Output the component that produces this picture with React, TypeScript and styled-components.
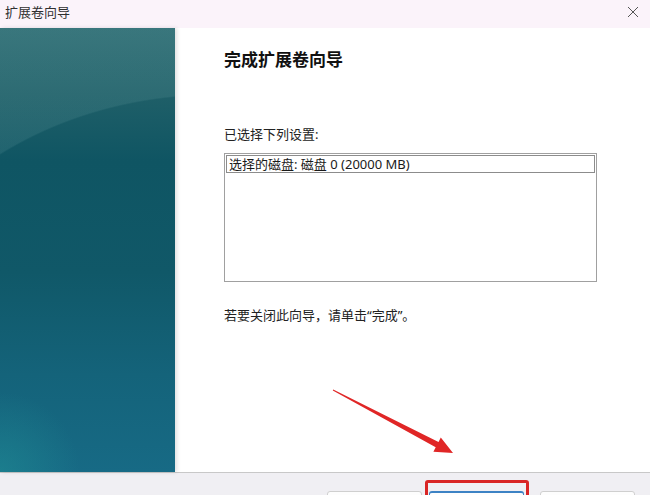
import { createGlobalStyle, styled } from 'styled-components';

const GlobalStyle = createGlobalStyle`
  html, body {
    margin: 0;
    padding: 0;
    background: #ffffff;
  }
  body {
    font-family: 'Noto Sans', 'Noto Sans CJK SC', sans-serif;
    color: #1a1a1a;
  }
`;

const Window = styled.div`
  position: relative;
  width: 650px;
  height: 495px;
  display: flex;
  flex-direction: column;
  overflow: hidden;
  background: #ffffff;
`;

const TitleBar = styled.div`
  height: 28px;
  flex: none;
  display: flex;
  align-items: center;
  justify-content: space-between;
  padding: 0 10px 0 5px;
  background: #fbf3fa;
`;

const Title = styled.span`
  font-size: 13px;
  line-height: 18px;
  color: #303030;
  margin-top: -5px;
`;

const CloseButton = styled.button`
  width: 14px;
  height: 14px;
  padding: 0;
  border: none;
  background: transparent;
  display: flex;
  align-items: center;
  justify-content: center;
  margin-top: -4px;
`;

const Body = styled.div`
  flex: none;
  height: 444px;
  display: flex;
`;

// wizard banner: dark teal with a soft swirl near the top
const SidePanel = styled.div`
  width: 175px;
  flex: none;
  box-shadow: 2px 0 4px rgba(0, 0, 0, 0.12);
  z-index: 1;
  background:
    radial-gradient(ellipse 360px 300px at 215px 366px, transparent 99.5%, rgba(140, 190, 190, 0.13) 100%),
    radial-gradient(circle at 0 100%, rgba(32, 145, 150, 0.5) 0, rgba(32, 145, 150, 0) 80px),
    linear-gradient(180deg, #2d6c73 0%, #1f5f68 15%, #0f5563 30%, #105868 55%, #14637a 78%, #176a85 100%);
`;

const Content = styled.div`
  flex: 1;
  display: flex;
  flex-direction: column;
  align-items: flex-start;
  padding: 20px 0 0 49px;
`;

const Heading = styled.h1`
  margin: 0;
  font-size: 17px;
  line-height: 24px;
  font-weight: 700;
  color: #111111;
`;

const Label = styled.p<{ $gap: number }>`
  margin: ${(p) => p.$gap}px 0 0;
  font-size: 13px;
  line-height: 18px;
  color: #222222;
`;

const ListBox = styled.div`
  margin-top: 10px;
  width: 373px;
  height: 129px;
  box-sizing: border-box;
  border: 1px solid #a0a0a0;
  padding: 1px;
  background: #ffffff;
`;

const ListRow = styled.div`
  height: 18px;
  box-sizing: border-box;
  border: 1px solid #8c8c8c;
  padding: 0 2px;
  font-size: 13px;
  line-height: 16px;
  color: #1a1a1a;
`;

const Separator = styled.div`
  height: 1px;
  flex: none;
  background: #c8c8c8;
`;

const Footer = styled.div`
  flex: 1;
  display: flex;
  align-items: flex-start;
  padding: 18px 15px 0 327px;
  background: #f0eff3;
`;

const ButtonSlot = styled.div<{ $space: number }>`
  position: relative;
  margin-left: ${(p) => p.$space}px;
`;

const WizardButton = styled.button<{ $primary?: boolean }>`
  width: 95px;
  height: 23px;
  box-sizing: border-box;
  border: 1px solid ${(p) => (p.$primary ? '#3c82c4' : '#cfcfcf')};
  border-top-width: ${(p) => (p.$primary ? 2 : 1)}px;
  border-radius: 3px;
  background: #fdfdfd;
  padding: 0;
`;

const Highlight = styled.div`
  position: absolute;
  left: -4px;
  right: -5px;
  top: -11px;
  height: 40px;
  border: 3px solid #d92525;
  border-radius: 3px;
  pointer-events: none;
`;

const Pointer = styled.svg`
  position: absolute;
  left: 0;
  top: 0;
  width: 650px;
  height: 495px;
  pointer-events: none;
`;

export default function App() {
  return (
    <>
      <GlobalStyle />
      <Window>
        <TitleBar>
          <Title>扩展卷向导</Title>
          <CloseButton aria-label="关闭">
            <svg width="12" height="12" viewBox="0 0 12 12">
              <path d="M1 1 L11 11 M11 1 L1 11" stroke="#555" strokeWidth="1" fill="none" />
            </svg>
          </CloseButton>
        </TitleBar>
        <Body>
          <SidePanel />
          <Content>
            <Heading>完成扩展卷向导</Heading>
            <Label $gap={53}>已选择下列设置:</Label>
            <ListBox>
              <ListRow>选择的磁盘: 磁盘 0 (20000 MB)</ListRow>
            </ListBox>
            <Label $gap={24}>若要关闭此向导，请单击“完成”。</Label>
          </Content>
        </Body>
        <Separator />
        <Footer>
          <ButtonSlot $space={0}>
            <WizardButton aria-label="上一步" />
          </ButtonSlot>
          <ButtonSlot $space={7}>
            <WizardButton $primary aria-label="完成" />
            <Highlight />
          </ButtonSlot>
          <ButtonSlot $space={16}>
            <WizardButton aria-label="取消" />
          </ButtonSlot>
        </Footer>
        <Pointer viewBox="0 0 650 495">
          <polygon
            points="333.2,389.6 438.5,441.9 440.8,437.5 453,453 433.4,451.7 435.7,447.3 332.8,390.4"
            fill="#e02626"
          />
        </Pointer>
      </Window>
    </>
  );
}
